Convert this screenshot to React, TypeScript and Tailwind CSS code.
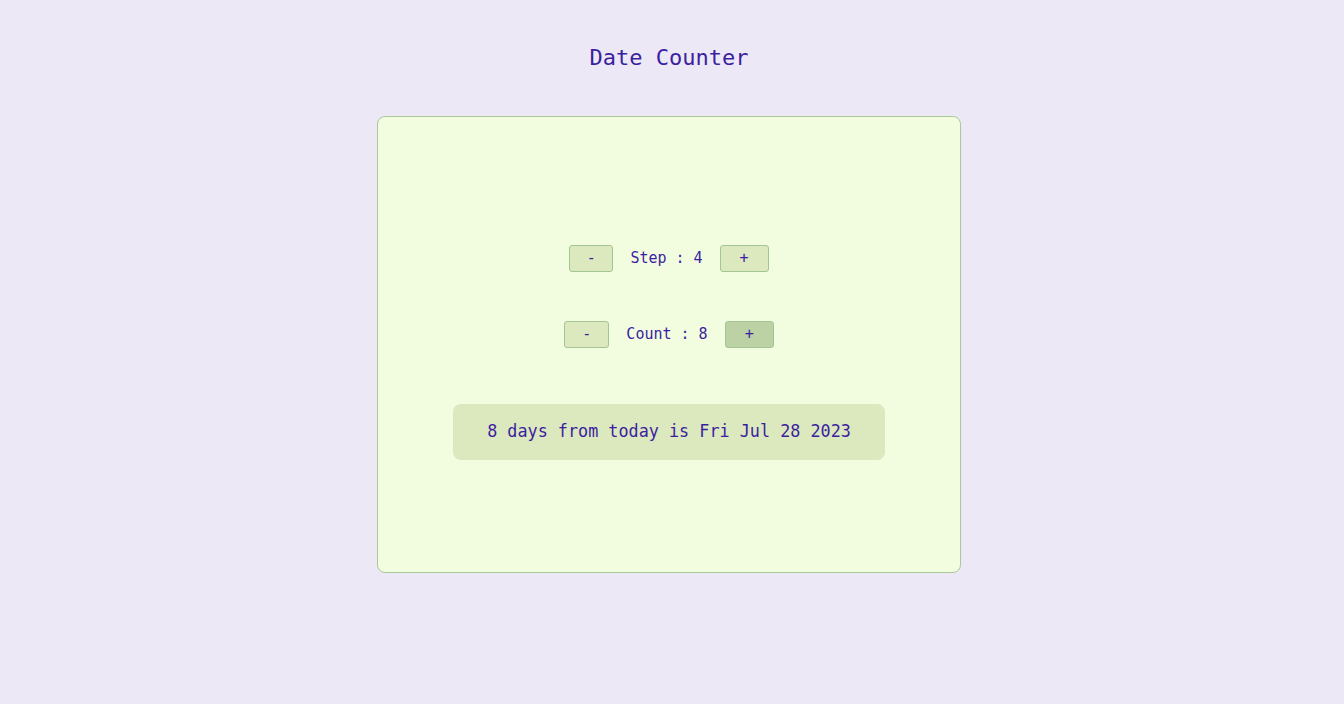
import React, { useState } from 'react';

const mono = "font-['DejaVu_Sans_Mono','Liberation_Mono',monospace]";

function CounterRow({ label, value, onDec, onInc, minusW, plusW, plusActive }: {
  label: string;
  value: number;
  onDec: () => void;
  onInc: () => void;
  minusW: string;
  plusW: string;
  plusActive?: boolean;
}) {
  return (
    <div className="flex items-center justify-center gap-[17px]">
      <button
        onClick={onDec}
        className={`${minusW} h-[27px] rounded-[3px] border border-[#a3c596] bg-[#dce8bd] text-[15px] leading-none text-[#3b1fa0]`}
      >
        -
      </button>
      <span className="text-[15px] text-[#3b1fa0]">
        {label} : {value}
      </span>
      <button
        onClick={onInc}
        className={`${plusW} h-[27px] rounded-[3px] border border-[#a3c596] text-[15px] leading-none text-[#3b1fa0] ${
          plusActive ? 'bg-[#bcd1a4]' : 'bg-[#dce8bd]'
        }`}
      >
        +
      </button>
    </div>
  );
}

export default function App() {
  const [step, setStep] = useState(4);
  const [count, setCount] = useState(8);

  const date = new Date('2023-07-20T12:00:00');
  date.setDate(date.getDate() + count);

  return (
    <div className={`min-h-[704px] w-full bg-[#ece8f5] pr-[6px] ${mono} flex flex-col items-center`}>
      <h1 className="mt-[43px] text-[22px] font-medium leading-[30px] text-[#3b1fa0]">Date Counter</h1>

      <div className="mt-[43px] flex h-[457px] w-[584px] flex-col items-center rounded-[8px] border border-[#a9c99b] bg-[#f2fde0] pt-[128px]">
        <CounterRow
          label="Step"
          value={step}
          onDec={() => setStep((s) => s - 1)}
          onInc={() => setStep((s) => s + 1)}
          minusW="w-[44px]"
          plusW="w-[49px]"
        />
        <div className="mt-[49px]">
          <CounterRow
            label="Count"
            value={count}
            onDec={() => setCount((c) => c - step)}
            onInc={() => setCount((c) => c + step)}
            minusW="w-[45px]"
            plusW="w-[49px]"
            plusActive
          />
        </div>

        <div className="mt-[56px] flex h-[56px] w-[432px] items-center justify-center rounded-[8px] bg-[#dce8bd] text-[16.8px] text-[#3b1fa0]">
          {count} days from today is {date.toDateString()}
        </div>
      </div>
    </div>
  );
}
